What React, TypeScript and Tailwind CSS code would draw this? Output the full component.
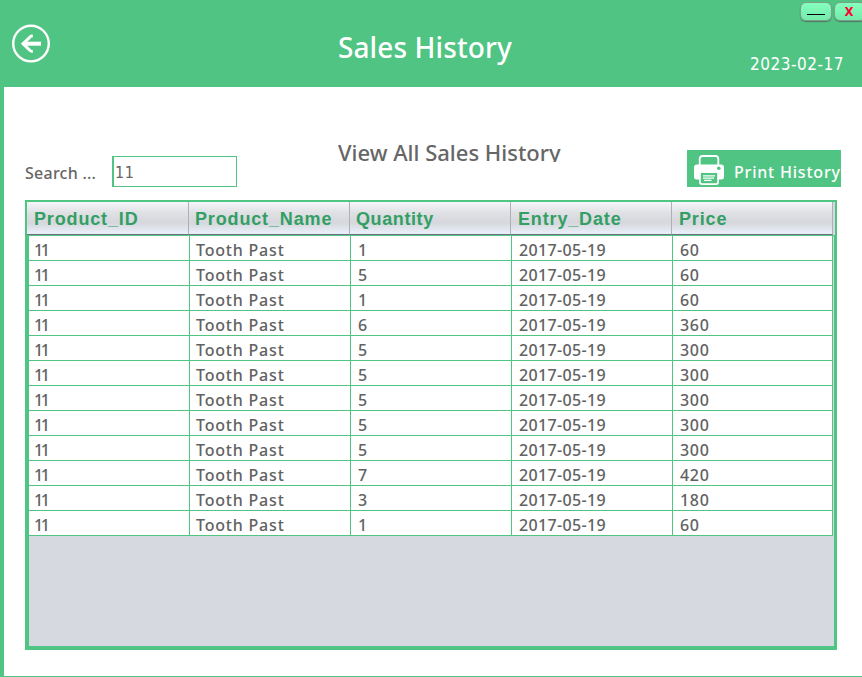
const sans = "font-['Noto_Sans','Open_Sans',sans-serif]";
const tahoma = "font-['DejaVu_Sans_Condensed','DejaVu_Sans',sans-serif]";

const columns = ['Product_ID', 'Product_Name', 'Quantity', 'Entry_Date', 'Price'];

// Per-column inset and letter spacing of the body cells.
const cellStyles = [
  'pl-[5px] tracking-[-2.4px]',
  'pl-[6px] tracking-[0.8px]',
  'pl-[7px] tracking-[0.7px]',
  'pl-[7px] tracking-[0.35px]',
  'pl-[7px] tracking-[0.7px]',
];

const sales: [string, string][] = [
  ['1', '60'],
  ['5', '60'],
  ['1', '60'],
  ['6', '360'],
  ['5', '300'],
  ['5', '300'],
  ['5', '300'],
  ['5', '300'],
  ['5', '300'],
  ['7', '420'],
  ['3', '180'],
  ['1', '60'],
];

function BackIcon() {
  return (
    <svg width="40" height="40" viewBox="0 0 40 40" fill="none" stroke="#fff">
      <circle cx="20" cy="19.6" r="17.8" strokeWidth="2.4" />
      <path d="M12 19.7H30" strokeWidth="4" />
      <path d="M21.8 11.8Q19.5 12 18.5 13.5L12 19.7L18.5 26Q19.5 27.4 21.8 27.6" strokeWidth="3" />
    </svg>
  );
}

function PrinterIcon() {
  return (
    <svg width="30" height="30" viewBox="0 0 30 30" fill="none">
      <path d="M5.7 11V4Q5.7 1 8.7 1H21.3Q24.3 1 24.3 4V11" stroke="#fff" strokeWidth="1.8" />
      <path d="M3 9.5H27Q30 9.5 30 12.5V22Q30 24.5 27 24.5H3Q0 24.5 0 22V12.5Q0 9.5 3 9.5Z" fill="#fff" />
      <path d="M6.4 18H23.6V27Q23.6 29 21.6 29H8.4Q6.4 29 6.4 27Z" fill="#50c483" />
      <path d="M5.9 18V27Q5.9 29.1 8 29.1H22Q24.1 29.1 24.1 27V18" stroke="#fff" strokeWidth="1.7" />
      <path d="M9 20.8H21M9 23.2H20M10 25.4H17.5" stroke="#fff" strokeWidth="1.3" />
      <circle cx="24.8" cy="13.2" r="1.8" fill="#50c483" />
    </svg>
  );
}

function Header() {
  return (
    <header className="flex h-[87px] items-start bg-[#50c483] text-white">
      <div className="w-[338px] pt-6 pl-[11px]">
        <BackIcon />
      </div>
      <h1 className={`w-[412px] pt-[27px] text-[28px] leading-[40px] font-medium tracking-[0.1px] whitespace-nowrap ${sans}`}>
        Sales History
      </h1>
      <div className="flex w-[112px] shrink-0 flex-col">
        <div className="flex gap-[2px] overflow-hidden pt-[2px] pb-[2px] pl-[50px]">
          <button className="flex h-[19px] w-8 shrink-0 justify-center rounded-[6px] border border-[#7a9f8a] bg-linear-to-b from-[#86ffbd] to-[#72ebab] pt-[11px] shadow-[0_1px_1px_#4f7561]">
            <span className="h-px w-[18px] bg-black" />
          </button>
          <button className="h-[19px] w-8 shrink-0 rounded-[6px] border border-[#7a9f8a] bg-linear-to-b from-[#86ffbd] to-[#72ebab] pr-[2px] font-['DejaVu_Sans_Condensed'] text-[13px] leading-[18px] font-bold text-[#ff0030] shadow-[0_1px_1px_#4f7561]">
            X
          </button>
        </div>
        <time className={`pt-[30px] text-[17px] leading-[22px] tracking-[0.5px] whitespace-nowrap ${tahoma}`}>2023-02-17</time>
      </div>
    </header>
  );
}

function Toolbar() {
  return (
    <div className="flex h-[113px] text-[#666]">
      <div className={`box-content w-[87px] pt-[74px] pl-[21px] text-[16px] leading-6 font-medium tracking-[0.25px] whitespace-nowrap ${sans}`}>
        Search ...
      </div>
      <input
        readOnly
        value="11"
        className={`mt-[69px] h-[31px] w-[125px] border border-l-2 border-[#50c483] pt-[2px] pl-px text-[16px] tracking-[0.5px] outline-none ${tahoma}`}
      />
      <h2 className={`ml-[101px] h-[75px] w-[349px] shrink-0 overflow-hidden pt-[49px] text-[22px] leading-8 font-medium tracking-[0px] whitespace-nowrap ${sans}`}>
        View All Sales History
      </h2>
      <button className={`mt-[63px] flex h-[37px] w-[154px] shrink-0 items-center bg-[#50c483] pt-[3px] pl-[7px] text-[16px] leading-6 font-medium tracking-[0.8px] whitespace-nowrap text-white ${sans}`}>
        <PrinterIcon />
        <span className="pt-[4px] pl-[10px]">Print History</span>
      </button>
    </div>
  );
}

function HistoryTable() {
  return (
    <div className="ml-[21px] flex h-[450px] w-[812px] flex-col bg-[#50c483] pt-[2px]">
      <div className="mr-[2px] ml-[2px] flex h-[33px] bg-[#d6d9e0]">
        {columns.map((name) => (
          <div
            key={name}
            className="w-[161px] shrink-0 border-r border-b border-r-[#adb0b7] border-b-[#6e7280] bg-[linear-gradient(#f5f6f9,#dee0e4_35%,#d5d7dc_65%,#e8edf7_95%)] pl-[7px] font-['Liberation_Sans',Arial,sans-serif] text-[18px] leading-[35px] font-bold tracking-[0.85px] whitespace-nowrap text-[#339f64] first:w-[162px] last:pl-[7px] nth-[2]:pl-[6px] nth-[3]:pl-[6px] nth-[3]:tracking-[0.6px]"
          >
            {name}
          </div>
        ))}
      </div>
      <div className="mt-px mr-[3px] mb-1 ml-1 flex-1 bg-[#d6d9e0]">
        <div className={`grid w-[804px] grid-cols-[161px_161px_161px_161px_160px] bg-white text-[16px] leading-[29px] font-medium text-[#626262] ${sans}`}>
          {sales.map(([quantity, price], row) =>
            ['11', 'Tooth Past', quantity, '2017-05-19', price].map((value, column) => (
              <div
                key={`${row}-${column}`}
                className={`h-[25px] border-r border-b border-[#50c483] whitespace-nowrap ${cellStyles[column]}`}
              >
                {value}
              </div>
            )),
          )}
        </div>
      </div>
    </div>
  );
}

export default function App() {
  return (
    <main className="h-[677px] w-[862px] overflow-hidden bg-[#50c483]">
      <Header />
      <div className="ml-1 h-[589px] bg-white">
        <Toolbar />
        <HistoryTable />
      </div>
    </main>
  );
}
